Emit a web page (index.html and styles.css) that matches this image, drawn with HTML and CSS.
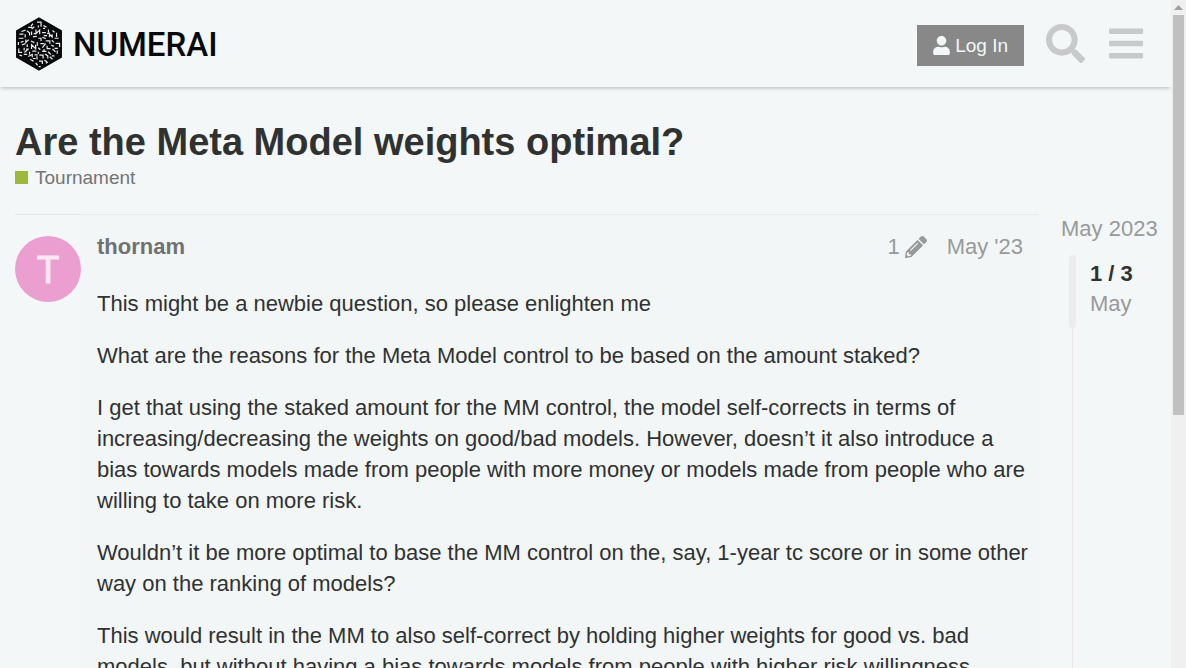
FILE: index.html
```html
<!DOCTYPE html>
<html lang="en">
<head>
<meta charset="utf-8">
<title>Are the Meta Model weights optimal? - Numerai Forum</title>
<link rel="stylesheet" href="styles.css">
</head>
<body>
<div class="viewport">
  <header class="site-header">
    <a class="brand" href="#">
      <svg class="brand-mark" viewBox="18 17 140 160" aria-hidden="true">
        <path d="M88 20 154 58V136L88 174 22 136V58Z" fill="#08090a" stroke="#08090a" stroke-width="4" stroke-linejoin="round"/>
        <g fill="none" stroke="#e9eced" stroke-width="3.600">
          <path d="M82 32H94V46M86 42V48M70 37 64 44M74 46 66 53M56 48H68M101 42 110 47M100 51H106M79 54V66L90 56V68M52 58 60 64V72M66 60V70M36 60 48 56M30 68H42M70 76 82 74M72 66H77M97 63H108M116 54V62M112 66 120 64M128 57 134 62"/>
          <path d="M119 77V68L127 76V68M140 64V76M134 80H146M102 72H112M98 77 108 81M47 68V78M28 80H42M49 84V92L58 84M86 80H94V88M66 112V99L78 111V99M64 88 74 93M83 92V102M92 96H104M108 88H120V96M126 86 132 92M137 95H149V106M98 108 108 96M112 102V111H122M124 100 132 104"/>
          <path d="M27 91V100M34 92 42 89M37 100 48 96M53 98V106M28 110V122H38M44 108V116M50 112H58M45 122 54 114M60 120V128M68 118H80M86 108 92 114M86 120V126M97 119H110M103 112V118M115 120 123 128M128 112 137 120M134 110H144M142 116V126M30 130 38 132M43 128H53M56 134 68 128V136M75 129H84M82 133V143M89 130H100V140M106 127 114 132V140M120 135 128 142M126 132H134M62 142 72 148M70 140H78M88 148H98V156M104 145 112 150M78 153 84 160M108 154 114 151M87 164H93"/>
        </g>
      </svg>
      <span class="brand-name">NUMERAI</span>
    </a>
    <nav class="header-actions">
      <button class="login" type="button">
        <svg class="login-icon" viewBox="0 0 448 512" aria-hidden="true"><path fill="currentColor" d="M224 256c70.700 0 128-57.300 128-128S294.700 0 224 0 96 57.300 96 128s57.300 128 128 128zm89.600 32h-16.700c-22.200 10.200-46.900 16-72.900 16s-50.600-5.800-72.900-16h-16.700C60.200 288 0 348.200 0 422.400V464c0 26.500 21.500 48 48 48h352c26.500 0 48-21.500 48-48v-41.600c0-74.200-60.200-134.400-134.400-134.400z"/></svg>
        <span>Log In</span>
      </button>
      <button class="icon-button" type="button" aria-label="Search">
        <svg class="search-icon" viewBox="0 0 512 512" aria-hidden="true"><path fill="currentColor" d="M505 442.700L405.300 343c-4.500-4.500-10.600-7-17-7H372c27.600-35.300 44-79.700 44-128C416 93.100 322.900 0 208 0S0 93.100 0 208s93.100 208 208 208c48.300 0 92.700-16.400 128-44v16.300c0 6.400 2.500 12.500 7 17l99.700 99.700c9.400 9.400 24.600 9.400 33.900 0l28.300-28.300c9.400-9.400 9.400-24.600.1-34zM208 336c-70.700 0-128-57.200-128-128 0-70.700 57.200-128 128-128 70.700 0 128 57.200 128 128 0 70.700-57.200 128-128 128z"/></svg>
      </button>
      <button class="icon-button" type="button" aria-label="Menu">
        <svg class="menu-icon" viewBox="0 0 448 512" aria-hidden="true"><path fill="currentColor" d="M16 132h416c8.837 0 16-7.163 16-16V76c0-8.837-7.163-16-16-16H16C7.163 60 0 67.163 0 76v40c0 8.837 7.163 16 16 16zm0 160h416c8.837 0 16-7.163 16-16v-40c0-8.837-7.163-16-16-16H16c-8.837 0-16 7.163-16 16v40c0 8.837 7.163 16 16 16zm0 160h416c8.837 0 16-7.163 16-16v-40c0-8.837-7.163-16-16-16H16c-8.837 0-16 7.163-16 16v40c0 8.837 7.163 16 16 16z"/></svg>
      </button>
    </nav>
  </header>

  <main class="topic">
    <h1 class="topic-title">Are the Meta Model weights optimal?</h1>
    <a class="category" href="#"><span class="category-badge"></span>Tournament</a>

    <div class="topic-grid">
      <article class="post">
        <div class="avatar" aria-hidden="true">
          <svg viewBox="0 0 66 66"><circle cx="33" cy="33" r="33" fill="#eb9fd1"/><text class="avatar-letter" x="33" y="47" text-anchor="middle">T</text></svg>
        </div>
        <div class="post-body">
          <div class="post-meta">
            <a class="author" href="#">thornam</a>
            <div class="post-info">
              <button class="edits" type="button" aria-label="1 edit">
                <span>1</span>
                <svg class="pencil" viewBox="0 0 512 512" aria-hidden="true"><path fill="currentColor" d="M497.900 142.100l-46.100 46.100c-4.700 4.700-12.300 4.700-17 0l-111-111c-4.700-4.700-4.700-12.300 0-17l46.100-46.100c18.700-18.700 49.100-18.700 67.900 0l60.100 60.100c18.800 18.700 18.800 49.100 0 67.900zM284.200 99.800L21.600 362.400.4 483.900c-2.900 16.400 11.400 30.600 27.800 27.800l121.500-21.300 262.600-262.600c4.700-4.700 4.700-12.300 0-17l-111-111c-4.800-4.700-12.400-4.700-17.100 0zM124.100 339.900c-5.500-5.500-5.500-14.300 0-19.800l154-154c5.500-5.500 14.300-5.500 19.800 0s5.500 14.300 0 19.800l-154 154c-5.500 5.500-14.300 5.500-19.800 0zM88 424h48v36.300l-64.500 11.300-31.100-31.100L51.700 376H88v48z"/></svg>
              </button>
              <a class="post-date" href="#">May '23</a>
            </div>
          </div>
          <div class="cooked">
            <p>This might be a newbie question, so please enlighten me</p>
            <p>What are the reasons for the Meta Model control to be based on the amount staked?</p>
            <p>I get that using the staked amount for the MM control, the model self-corrects in terms of increasing/decreasing the weights on good/bad models. However, doesn’t it also introduce a bias towards models made from people with more money or models made from people who are willing to take on more risk.</p>
            <p>Wouldn’t it be more optimal to base the MM control on the, say, 1-year tc score or in some other way on the ranking of models?</p>
            <p>This would result in the MM to also self-correct by holding higher weights for good vs. bad models, but without having a bias towards models from people with higher risk willingness.</p>
          </div>
        </div>
      </article>

      <aside class="timeline">
        <a class="timeline-start" href="#">May 2023</a>
        <div class="timeline-track">
          <div class="timeline-scroller">
            <div class="timeline-handle"></div>
            <div class="timeline-position">
              <strong>1 / 3</strong>
              <span>May</span>
            </div>
          </div>
        </div>
      </aside>
    </div>
  </main>
</div>
<div class="scrollbar" aria-hidden="true">
  <svg class="scroll-arrow" viewBox="0 0 15 15"><path d="M3 10 7.500 5 12 10Z" fill="#a0a0a0"/></svg>
  <div class="scroll-thumb"></div>
</div>
</body>
</html>
```
FILE: styles.css
```css
* {
  box-sizing: border-box;
}

body {
  margin: 0;
  display: flex;
  height: 100vh;
  overflow: hidden;
  background: #f3f7f8;
  color: #303131;
  font-family: "Liberation Sans", Arial, sans-serif;
  font-size: 22px;
  line-height: 31px;
}

a {
  color: inherit;
  text-decoration: none;
}

button {
  margin: 0;
  padding: 0;
  border: 0;
  background: none;
  color: inherit;
  font: inherit;
  cursor: pointer;
}

svg {
  display: block;
}

.viewport {
  flex: 1;
  min-width: 0;
  display: flex;
  flex-direction: column;
  overflow: hidden;
}

.site-header {
  flex: none;
  display: flex;
  align-items: center;
  justify-content: space-between;
  padding: 15px 20px 15px 15px;
  background: #f3f7f8;
  box-shadow: 0 2px 4px -1px rgba(0, 0, 0, 0.25);
}

.brand {
  display: flex;
  align-items: center;
  gap: 10px;
  height: 57px;
  color: #08090a;
}

.brand-mark {
  width: 48px;
  height: 54px;
}

.brand-name {
  padding-top: 2px;
  font-family: Roboto, sans-serif;
  font-size: 33px;
  font-weight: 500;
}

.header-actions {
  display: flex;
  align-items: center;
  color: #c8c9ca;
}

.login {
  display: flex;
  align-items: center;
  gap: 5px;
  height: 41px;
  margin: 4px 17px 0 0;
  padding: 0 16px;
  background: #888;
  color: #f3f7f8;
  font-size: 19px;
}

.login-icon {
  width: 17px;
  height: 19px;
}

.icon-button {
  display: grid;
  place-items: center;
  width: 49px;
  height: 49px;
}

.icon-button + .icon-button {
  margin-left: 12px;
}

.search-icon,
.menu-icon {
  height: 39px;
}

.topic {
  padding: 33px 15px 0;
}

.topic-title {
  margin: 0;
  font-size: 38px;
  line-height: 44px;
}

.category {
  display: flex;
  align-items: center;
  gap: 7px;
  height: 27px;
  color: #737474;
  font-size: 19px;
}

.category-badge {
  width: 13px;
  height: 13px;
  background: #9eb83b;
}

.topic-grid {
  display: grid;
  grid-template-columns: minmax(0, 1fr) 95px;
  gap: 22px;
  margin-top: 23px;
}

.post {
  display: flex;
  border-top: 1px solid #e9eaea;
}

.avatar {
  flex: none;
  width: 66px;
  padding-top: 21px;
}

.avatar-letter {
  fill: #fbe6f5;
  font-family: "Noto Sans", sans-serif;
  font-size: 39px;
  stroke: #fbe6f5;
  stroke-width: 1px;
}

.post-body {
  flex: 1;
  min-width: 0;
  padding: 16px 8px 0 16px;
  background: #f2f6f7;
}

.post-meta,
.post-info,
.edits {
  display: flex;
  align-items: center;
}

.post-meta {
  justify-content: space-between;
  padding-right: 8px;
}

.author {
  color: #707272;
  font-weight: bold;
}

.post-info {
  gap: 20px;
  color: #989a9a;
}

.edits {
  gap: 5px;
}

.pencil {
  width: 22px;
  height: 22px;
}

.cooked {
  padding-top: 26px;
}

.cooked p {
  margin: 0 0 21px;
}

.timeline {
  display: flex;
  flex-direction: column;
  color: #989a9a;
  white-space: nowrap;
}

.timeline-start {
  line-height: 30px;
}

.timeline-track {
  flex: 1;
  margin: 11px 0 0 11px;
  border-left: 1px solid #ebe8ea;
}

.timeline-scroller {
  display: flex;
  gap: 14px;
  height: 73px;
  margin-left: -4px;
}

.timeline-handle {
  width: 7px;
  border-radius: 4px;
  background: #ececed;
}

.timeline-position {
  display: flex;
  flex-direction: column;
  padding-top: 4px;
  line-height: 30px;
}

.timeline-position strong {
  color: #303131;
}

.scrollbar {
  flex: none;
  width: 15px;
  background: #f0f0f0;
}

.scroll-arrow {
  width: 15px;
  height: 15px;
}

.scroll-thumb {
  height: 400px;
  margin: 0 2px;
  background: #c0c0c0;
}
```
